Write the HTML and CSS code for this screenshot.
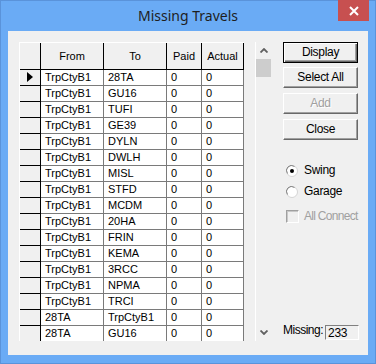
FILE: index.html
```html
<!DOCTYPE html>
<html>
<head>
<meta charset="utf-8">
<link rel="stylesheet" href="styles.css">
</head>
<body>
<div class="window">
  <div class="titlebar">
    <span></span>
    <span class="title">Missing Travels</span>
    <div class="close"><svg width="10" height="10" viewBox="0 0 10 10"><path d="M1 1 L9 9 M9 1 L1 9" stroke="#fff" stroke-width="2"/></svg></div>
  </div>
  <div class="client">
    <div class="gridctl">
      <div class="grid">
        <div class="row head">
          <div class="c ind"></div><div class="c w1">From</div><div class="c w2">To</div><div class="c w3">Paid</div><div class="c w4">Actual</div>
        </div>
        <div class="row"><div class="c ind"><svg class="arrow" width="6" height="10" viewBox="0 0 6 10"><path d="M0 0 L6 5 L0 10 Z" fill="#000"/></svg></div><div class="c w1">TrpCtyB1</div><div class="c w2">28TA</div><div class="c w3">0</div><div class="c w4">0</div></div>
        <div class="row"><div class="c ind"></div><div class="c w1">TrpCtyB1</div><div class="c w2">GU16</div><div class="c w3">0</div><div class="c w4">0</div></div>
        <div class="row"><div class="c ind"></div><div class="c w1">TrpCtyB1</div><div class="c w2">TUFI</div><div class="c w3">0</div><div class="c w4">0</div></div>
        <div class="row"><div class="c ind"></div><div class="c w1">TrpCtyB1</div><div class="c w2">GE39</div><div class="c w3">0</div><div class="c w4">0</div></div>
        <div class="row"><div class="c ind"></div><div class="c w1">TrpCtyB1</div><div class="c w2">DYLN</div><div class="c w3">0</div><div class="c w4">0</div></div>
        <div class="row"><div class="c ind"></div><div class="c w1">TrpCtyB1</div><div class="c w2">DWLH</div><div class="c w3">0</div><div class="c w4">0</div></div>
        <div class="row"><div class="c ind"></div><div class="c w1">TrpCtyB1</div><div class="c w2">MISL</div><div class="c w3">0</div><div class="c w4">0</div></div>
        <div class="row"><div class="c ind"></div><div class="c w1">TrpCtyB1</div><div class="c w2">STFD</div><div class="c w3">0</div><div class="c w4">0</div></div>
        <div class="row"><div class="c ind"></div><div class="c w1">TrpCtyB1</div><div class="c w2">MCDM</div><div class="c w3">0</div><div class="c w4">0</div></div>
        <div class="row"><div class="c ind"></div><div class="c w1">TrpCtyB1</div><div class="c w2">20HA</div><div class="c w3">0</div><div class="c w4">0</div></div>
        <div class="row"><div class="c ind"></div><div class="c w1">TrpCtyB1</div><div class="c w2">FRIN</div><div class="c w3">0</div><div class="c w4">0</div></div>
        <div class="row"><div class="c ind"></div><div class="c w1">TrpCtyB1</div><div class="c w2">KEMA</div><div class="c w3">0</div><div class="c w4">0</div></div>
        <div class="row"><div class="c ind"></div><div class="c w1">TrpCtyB1</div><div class="c w2">3RCC</div><div class="c w3">0</div><div class="c w4">0</div></div>
        <div class="row"><div class="c ind"></div><div class="c w1">TrpCtyB1</div><div class="c w2">NPMA</div><div class="c w3">0</div><div class="c w4">0</div></div>
        <div class="row"><div class="c ind"></div><div class="c w1">TrpCtyB1</div><div class="c w2">TRCI</div><div class="c w3">0</div><div class="c w4">0</div></div>
        <div class="row"><div class="c ind"></div><div class="c w1">28TA</div><div class="c w2">TrpCtyB1</div><div class="c w3">0</div><div class="c w4">0</div></div>
        <div class="row"><div class="c ind"></div><div class="c w1">28TA</div><div class="c w2">GU16</div><div class="c w3">0</div><div class="c w4">0</div></div>
      </div>
      <div class="gap"></div>
      <div class="scroll">
        <div class="sarrow"><svg width="8" height="5" viewBox="0 0 8 5"><path d="M0.5 4.5 L4 1 L7.5 4.5" fill="none" stroke="#606060" stroke-width="1.8"/></svg></div>
        <div class="thumb"></div>
        <div class="track"></div>
        <div class="sarrow"><svg width="8" height="5" viewBox="0 0 8 5"><path d="M0.5 0.5 L4 4 L7.5 0.5" fill="none" stroke="#606060" stroke-width="1.8"/></svg></div>
      </div>
    </div>
    <div class="panel">
      <div class="btn default">Display</div>
      <div class="btn">Select All</div>
      <div class="btn disabled">Add</div>
      <div class="btn">Close</div>
      <div class="opt first">
        <svg class="radio" width="12" height="12" viewBox="0 0 12 12"><circle cx="6" cy="6" r="5.5" fill="#fff" stroke="#d4d4d4"/><path d="M1.5 8.5 A5 5 0 0 1 8.5 1.5" fill="none" stroke="#808080" stroke-width="1"/><circle cx="6" cy="6" r="2" fill="#000"/></svg>
        <span>Swing</span>
      </div>
      <div class="opt second">
        <svg class="radio" width="12" height="12" viewBox="0 0 12 12"><circle cx="6" cy="6" r="5.5" fill="#fff" stroke="#d4d4d4"/><path d="M1.5 8.5 A5 5 0 0 1 8.5 1.5" fill="none" stroke="#808080" stroke-width="1"/></svg>
        <span>Garage</span>
      </div>
      <div class="opt third">
        <div class="check"></div>
        <span class="dis">All Connect</span>
      </div>
      <div class="missing">
        <span class="mlabel">Missing:</span>
        <div class="mbox">233</div>
      </div>
    </div>
  </div>
</div>
</body>
</html>
```
FILE: styles.css
```css
html, body {
  margin: 0;
  padding: 0;
  background: #6aabf5;
}
.window {
  width: 376px;
  height: 364px;
  box-sizing: border-box;
  border: 1px solid #5a93da;
  background: #6aabf5;
  display: flex;
  flex-direction: column;
}
.titlebar {
  height: 30px;
  display: grid;
  grid-template-columns: 1fr auto 1fr;
}
.title {
  font-family: "Noto Sans", sans-serif;
  font-size: 14px;
  color: #1e1e1e;
  line-height: 30px;
}
.close {
  justify-self: end;
  align-self: start;
  margin-top: -1px;
  margin-right: 6px;
  width: 31px;
  height: 21px;
  background: #c75050;
  display: flex;
  align-items: center;
  justify-content: center;
}
.client {
  margin: 0 7px 8px 7px;
  height: 324px;
  box-sizing: border-box;
  background: #f0f0f0;
  padding: 11px 0 14px 11px;
  display: flex;
  font-family: "Liberation Sans", Arial, sans-serif;
}
.gridctl {
  display: flex;
  height: 299px;
  overflow: hidden;
}
.grid {
  border-left: 1px solid #fff;
  border-top: 1px solid #fff;
  width: 225px;
  box-sizing: border-box;
  background: #fff;
  font-size: 11px;
  color: #000;
}
.row {
  display: flex;
  height: 16px;
}
.row.head {
  height: 27px;
}
.c {
  box-sizing: border-box;
  height: 100%;
  border-right: 1px solid #7a7a7a;
  border-bottom: 1px solid #7a7a7a;
  padding-left: 4px;
  line-height: 15px;
  white-space: nowrap;
  overflow: hidden;
}
.head .c {
  background: #f0f0f0;
  border-color: #000;
  text-align: center;
  padding-left: 0;
  line-height: 26px;
}
.ind {
  width: 21px;
  background: #f0f0f0;
  border-color: #000;
  padding-left: 7px;
}
.arrow {
  display: block;
  margin-top: 2px;
}
.w1 { width: 63px; }
.w2 { width: 63px; }
.w3 { width: 35px; }
.w4 { width: 42px; }
.gap {
  width: 11px;
}
.scroll {
  width: 17px;
  box-sizing: border-box;
  border-left: 1px solid #fff;
  display: flex;
  flex-direction: column;
}
.sarrow {
  height: 17px;
  display: flex;
  align-items: center;
  justify-content: center;
}
.thumb {
  width: 15px;
  height: 18px;
  background: #cdcdcd;
}
.track {
  flex: 1;
}
.panel {
  margin-left: 11px;
  width: 75px;
  display: flex;
  flex-direction: column;
  font-size: 12px;
  letter-spacing: -0.3px;
  white-space: nowrap;
}
.btn {
  height: 21px;
  box-sizing: border-box;
  border: 1px solid;
  border-color: #fff #696969 #696969 #fff;
  box-shadow: inset -1px -1px #a0a0a0;
  text-align: center;
  line-height: 19px;
  color: #000;
  margin-top: 5px;
}
.btn.default {
  margin-top: 0;
  border-color: #000;
  box-shadow: inset 1px 1px #fff, inset -1px -1px #696969, inset -2px -2px #a0a0a0;
}
.btn.default + .btn { margin-top: 4px; }
.btn.disabled {
  color: #a0a0a0;
  text-shadow: 1px 1px #fff;
}
.opt {
  display: flex;
  align-items: center;
  height: 13px;
  line-height: 13px;
}
.opt.first { margin-top: 24px; }
.opt.second { margin-top: 8px; }
.opt.third { margin-top: 12px; }
.radio {
  margin-left: 3px;
  margin-right: 6px;
  flex: none;
}
.check {
  width: 13px;
  height: 13px;
  box-sizing: border-box;
  flex: none;
  margin-left: 3px;
  margin-right: 5px;
  border: 1px solid;
  border-color: #a0a0a0 #fff #fff #a0a0a0;
  box-shadow: inset 1px 1px #c8c8c8;
  background: #f0f0f0;
}
.dis {
  color: #a0a0a0;
  letter-spacing: -0.7px;
}
.missing {
  margin-top: auto;
  margin-bottom: 1px;
  display: flex;
  align-items: flex-start;
}
.mlabel {
  line-height: 13px;
  letter-spacing: -0.5px;
}
.mbox {
  margin-left: 2px;
  margin-top: 1px;
  width: 34px;
  height: 15px;
  box-sizing: border-box;
  flex: none;
  border: 1px solid;
  border-color: #808080 #fff #fff #808080;
  background: #f0f0f0;
  padding-left: 2px;
  line-height: 14px;
  font-size: 12px;
}
```
